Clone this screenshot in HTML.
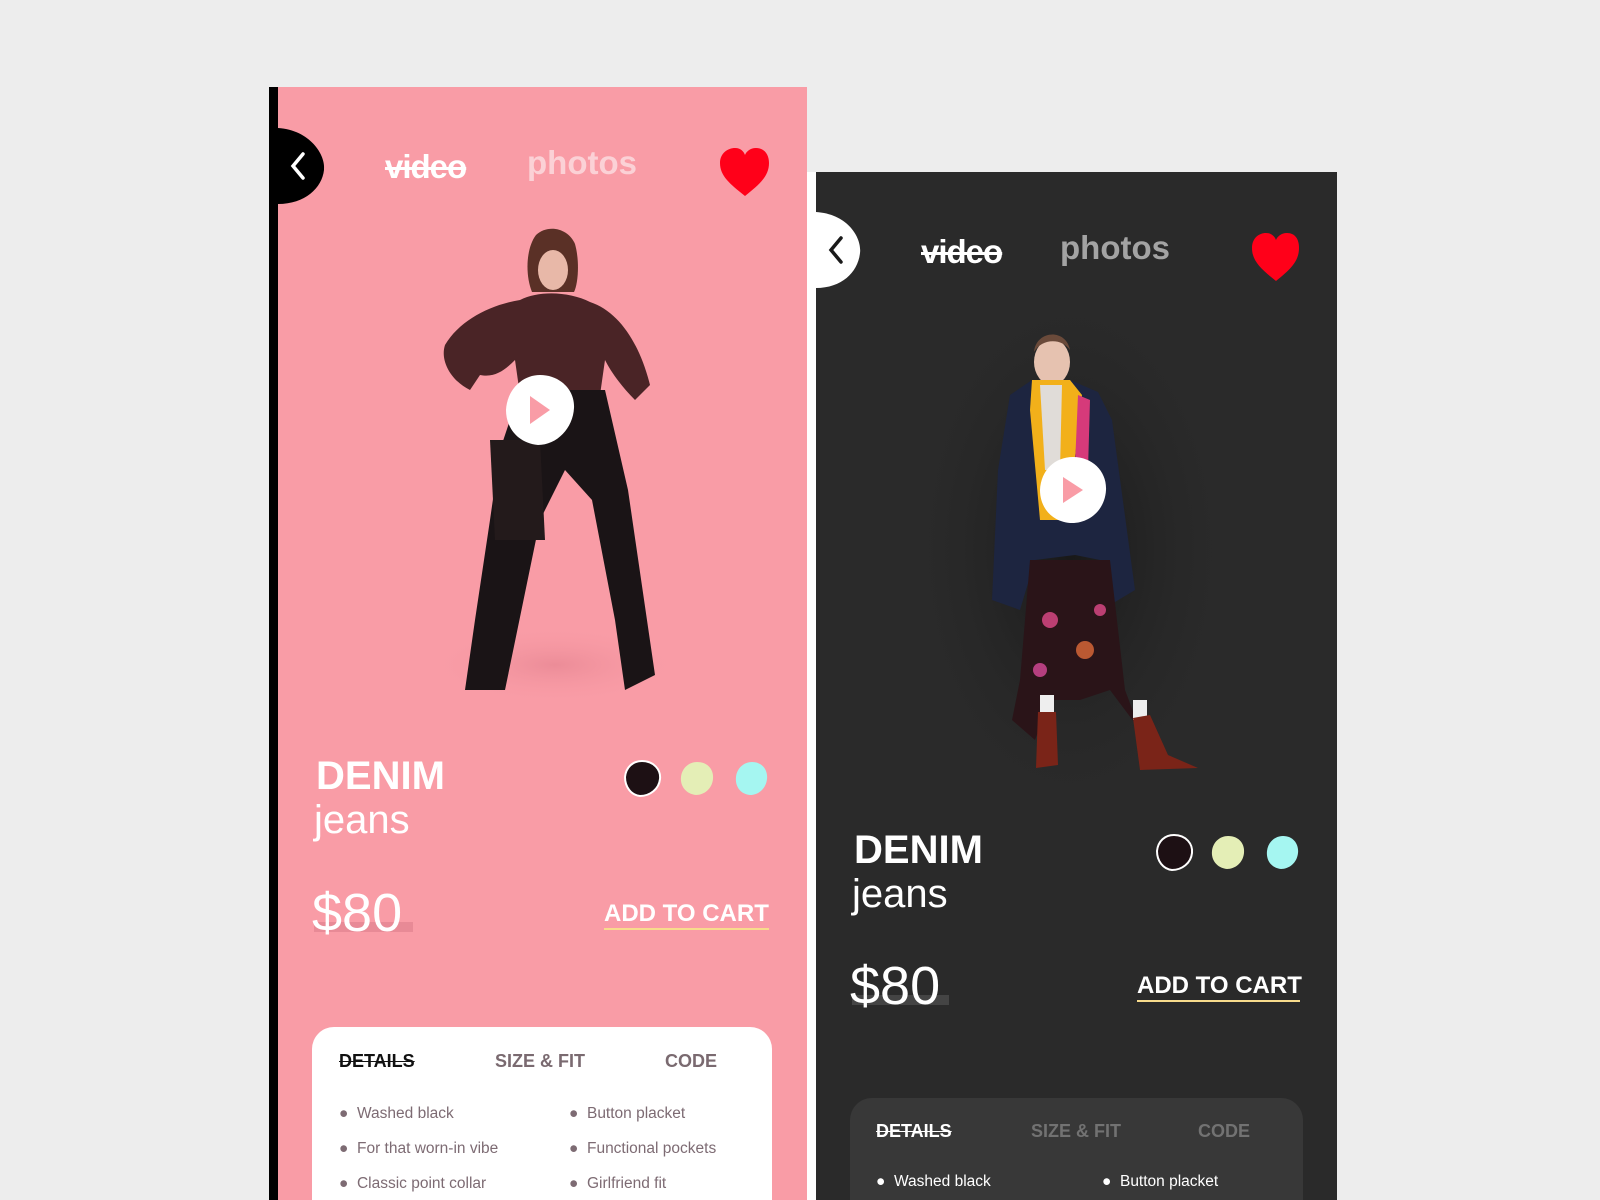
<!DOCTYPE html>
<html style="width:1600px;height:1200px;overflow:hidden"><head><meta charset="utf-8"><style>
*{margin:0;padding:0;box-sizing:border-box}
body{width:1600px;height:1200px;background:#ededed;position:relative;overflow:hidden;font-family:"Liberation Sans",sans-serif}
.abs{position:absolute}
.t{position:absolute;white-space:nowrap;line-height:1}
</style></head><body>
<div class="abs" style="left:269px;top:87px;width:9px;height:1113px;background:#000"></div>
<div class="abs" style="left:278px;top:87px;width:529px;height:1113px;background:#f99ca6"></div>
<div class="abs" style="left:807px;top:172px;width:9px;height:1028px;background:#fff"></div>
<div class="abs" style="left:816px;top:172px;width:521px;height:1028px;background:#2a2a2a"></div>

<svg class="abs" style="left:0;top:0" width="1600" height="1200">
<defs>
<radialGradient id="gp"><stop offset="0" stop-color="#e88894" stop-opacity=".8"/><stop offset="1" stop-color="#f99ca6" stop-opacity="0"/></radialGradient>
<radialGradient id="gd"><stop offset="0" stop-color="#161616" stop-opacity=".9"/><stop offset="1" stop-color="#2a2a2a" stop-opacity="0"/></radialGradient>
</defs>
<path d="M278 128 C310 130 326 155 324 170 C322 188 305 204 278 204 Z" fill="#000"/>
<path d="M303 154 L293 166 L303 178" stroke="#fff" stroke-width="3.5" fill="none" stroke-linecap="round"/>
<path d="M745 196 C730 184 720 176 720 163 C720 153 728 148 735 148 C741 148 744 152 745 155 C746 152 750 148 756 148 C764 148 769 154 769 163 C769 176 760 184 745 196Z" fill="#ff0019"/>
<ellipse cx="555" cy="665" rx="130" ry="40" fill="url(#gp)"/>
<path d="M536 235 C548 224 568 228 575 244 C580 262 578 284 574 292 L532 292 C525 275 526 248 536 235Z" fill="#5a3026"/>
<ellipse cx="553" cy="270" rx="15" ry="20" fill="#e8b8a8"/>
<path d="M520 300 C540 290 570 292 590 302 C620 312 640 345 650 385 L635 400 C620 385 610 370 605 360 L600 395 L520 395 L515 360 C505 370 495 378 480 375 L470 390 C450 380 440 360 445 345 C460 320 490 305 520 300Z" fill="#4a2426"/>
<path d="M520 390 L605 390 L628 490 L655 675 L625 690 L615 620 L592 500 L565 470 L540 520 L505 690 L465 690 L475 620 L490 520 L500 450Z" fill="#1a1416"/>
<path d="M490 440 L540 440 L545 540 L495 540Z" fill="#231a1b"/>
<path d="M540 375 C560 375 575 390 574 408 C573 428 557 445 538 445 C518 443 506 428 506 410 C507 390 522 375 540 375Z" fill="#fff"/>
<path d="M530 396 L550 410 L530 424Z" fill="#f99ca6"/>
<path d="M642 761 C654 761 661 770 660 779 C659 789 650 796 640 796 C631 795 625 787 625 777 C626 767 633 761 642 761Z" fill="#1d1014" stroke="#fff" stroke-width="2"/>
<path d="M697 762 C709 762 714 771 713 779 C712 789 704 795 696 795 C686 794 680 786 681 777 C682 768 689 762 697 762Z" fill="#e4eeb6"/>
<path d="M752 762 C763 762 768 771 767 779 C766 789 758 795 750 795 C740 794 735 786 736 777 C737 768 744 762 752 762Z" fill="#a5f6f1"/>

<path d="M816 212 C848 214 862 238 860 253 C858 272 842 288 816 288 Z" fill="#fff"/>
<path d="M841 238 L831 250 L841 262" stroke="#1a1a1a" stroke-width="3.5" fill="none" stroke-linecap="round"/>
<path d="M1276 281 C1261 269 1252 261 1252 248 C1252 238 1259 233 1266 233 C1272 233 1275 237 1276 240 C1277 237 1281 233 1287 233 C1295 233 1299 239 1299 248 C1299 261 1291 269 1276 281Z" fill="#ff0019"/>
<ellipse cx="1070" cy="550" rx="170" ry="280" fill="url(#gd)"/>
<ellipse cx="1052" cy="362" rx="18" ry="23" fill="#e6c2b0"/>
<path d="M1034 352 C1036 330 1066 328 1070 350 C1062 338 1042 338 1034 352Z" fill="#6a4a3a"/>
<path d="M1010 395 L1032 380 L1070 380 L1098 392 L1112 420 L1135 590 L1105 608 L1100 560 L1075 555 L1035 560 L1020 610 L992 600 L998 470Z" fill="#1d2540"/>
<path d="M1032 380 L1070 380 L1082 395 L1068 520 L1040 520 L1030 410Z" fill="#f2b01a"/>
<path d="M1040 385 L1062 385 L1060 470 L1045 470Z" fill="#e0dcd8"/>
<path d="M1078 395 L1090 400 L1088 470 L1075 465Z" fill="#d63a7a"/>
<path d="M1030 560 L1110 560 L1125 690 L1140 730 L1110 690 L1080 700 L1050 700 L1035 740 L1012 720 L1020 680Z" fill="#2a1418"/>
<circle cx="1050" cy="620" r="8" fill="#e04a8a" opacity=".8"/><circle cx="1085" cy="650" r="9" fill="#e06a3a" opacity=".8"/><circle cx="1040" cy="670" r="7" fill="#d84a9a" opacity=".8"/><circle cx="1100" cy="610" r="6" fill="#e04a8a" opacity=".8"/>
<rect x="1040" y="695" width="14" height="20" fill="#eee"/><rect x="1133" y="700" width="14" height="20" fill="#eee"/>
<path d="M1038 712 L1056 712 L1058 765 L1036 768Z" fill="#7a2418"/>
<path d="M1133 718 L1150 715 L1168 755 L1198 768 L1140 770Z" fill="#7a2418"/>
<path d="M1073 457 C1093 457 1107 472 1106 490 C1105 510 1089 524 1070 523 C1050 521 1040 506 1040 490 C1041 470 1055 457 1073 457Z" fill="#fff"/>
<path d="M1063 477 L1083 490 L1063 503Z" fill="#f99ca6"/>
<path d="M1174 835 C1186 835 1193 844 1192 853 C1191 863 1182 870 1172 870 C1163 869 1157 861 1157 851 C1158 841 1165 835 1174 835Z" fill="#1d1014" stroke="#fff" stroke-width="2"/>
<path d="M1228 836 C1240 836 1245 845 1244 853 C1243 863 1235 869 1227 869 C1217 868 1211 860 1212 851 C1213 842 1220 836 1228 836Z" fill="#e4eeb6"/>
<path d="M1283 836 C1294 836 1299 845 1298 853 C1297 863 1289 869 1281 869 C1271 868 1266 860 1267 851 C1268 842 1275 836 1283 836Z" fill="#a5f6f1"/>
</svg>

<div class="t" style="left:385px;top:150px;font-size:33px;font-weight:bold;color:#fff;letter-spacing:-1px"><span style="text-decoration:line-through;text-decoration-thickness:3px">video</span></div>
<div class="t" style="left:527px;top:146px;font-size:33px;font-weight:bold;color:#fbd1d6">photos</div>
<div class="t" style="left:316px;top:756px;font-size:40px;font-weight:bold;color:#fff">DENIM</div>
<div class="t" style="left:314px;top:800px;font-size:40px;color:#fff">jeans</div>
<div class="abs" style="left:314px;top:922px;width:99px;height:10px;background:#e88a96"></div>
<div class="t" style="left:312px;top:886px;font-size:54px;color:#fff;font-weight:300">$80</div>
<div class="t" style="left:604px;top:902px;font-size:24px;font-weight:bold;color:#fff">ADD TO CART</div>
<div class="abs" style="left:604px;top:928px;width:165px;height:2px;background:#f8db8c"></div>
<div class="abs" style="left:312px;top:1027px;width:460px;height:173px;background:#fff;border-radius:22px 22px 0 0"></div>
<div class="t" style="left:339px;top:1052px;font-size:18px;font-weight:bold;color:#111;text-decoration:line-through">DETAILS</div>
<div class="t" style="left:495px;top:1052px;font-size:18px;font-weight:bold;color:#7a6a70">SIZE &amp; FIT</div>
<div class="t" style="left:665px;top:1052px;font-size:18px;font-weight:bold;color:#7a6a70">CODE</div>
<div style="position:absolute;left:339px;top:1096px;font-size:15.5px;color:#7d6b73;line-height:35px">
<div style="position:absolute;left:0;top:0;width:230px">
<div>● &nbsp;Washed black</div><div>● &nbsp;For that worn-in vibe</div><div>● &nbsp;Classic point collar</div></div>
<div style="position:absolute;left:230px;top:0;width:230px">
<div>● &nbsp;Button placket</div><div>● &nbsp;Functional pockets</div><div>● &nbsp;Girlfriend fit</div></div></div>

<div class="t" style="left:921px;top:235px;font-size:33px;font-weight:bold;color:#fff;letter-spacing:-1px"><span style="text-decoration:line-through;text-decoration-thickness:3px">video</span></div>
<div class="t" style="left:1060px;top:231px;font-size:33px;font-weight:bold;color:#a3a3a3">photos</div>
<div class="t" style="left:854px;top:830px;font-size:40px;font-weight:bold;color:#fff">DENIM</div>
<div class="t" style="left:852px;top:874px;font-size:40px;color:#fff">jeans</div>
<div class="abs" style="left:852px;top:995px;width:97px;height:10px;background:#444"></div>
<div class="t" style="left:850px;top:959px;font-size:54px;color:#fff;font-weight:300">$80</div>
<div class="t" style="left:1137px;top:974px;font-size:24px;font-weight:bold;color:#fff">ADD TO CART</div>
<div class="abs" style="left:1137px;top:1000px;width:163px;height:2px;background:#f8db8c"></div>
<div class="abs" style="left:850px;top:1098px;width:453px;height:102px;background:#383838;border-radius:22px 22px 0 0"></div>
<div class="t" style="left:876px;top:1122px;font-size:18px;font-weight:bold;color:#fff;text-decoration:line-through">DETAILS</div>
<div class="t" style="left:1031px;top:1122px;font-size:18px;font-weight:bold;color:#727272">SIZE &amp; FIT</div>
<div class="t" style="left:1198px;top:1122px;font-size:18px;font-weight:bold;color:#727272">CODE</div>
<div style="position:absolute;left:876px;top:1164px;font-size:15.5px;color:#fff;line-height:35px;height:36px;overflow:hidden;width:420px">
<div style="position:absolute;left:0;top:0;width:230px"><div>● &nbsp;Washed black</div></div>
<div style="position:absolute;left:226px;top:0;width:190px"><div>● &nbsp;Button placket</div></div></div>
</body></html>
